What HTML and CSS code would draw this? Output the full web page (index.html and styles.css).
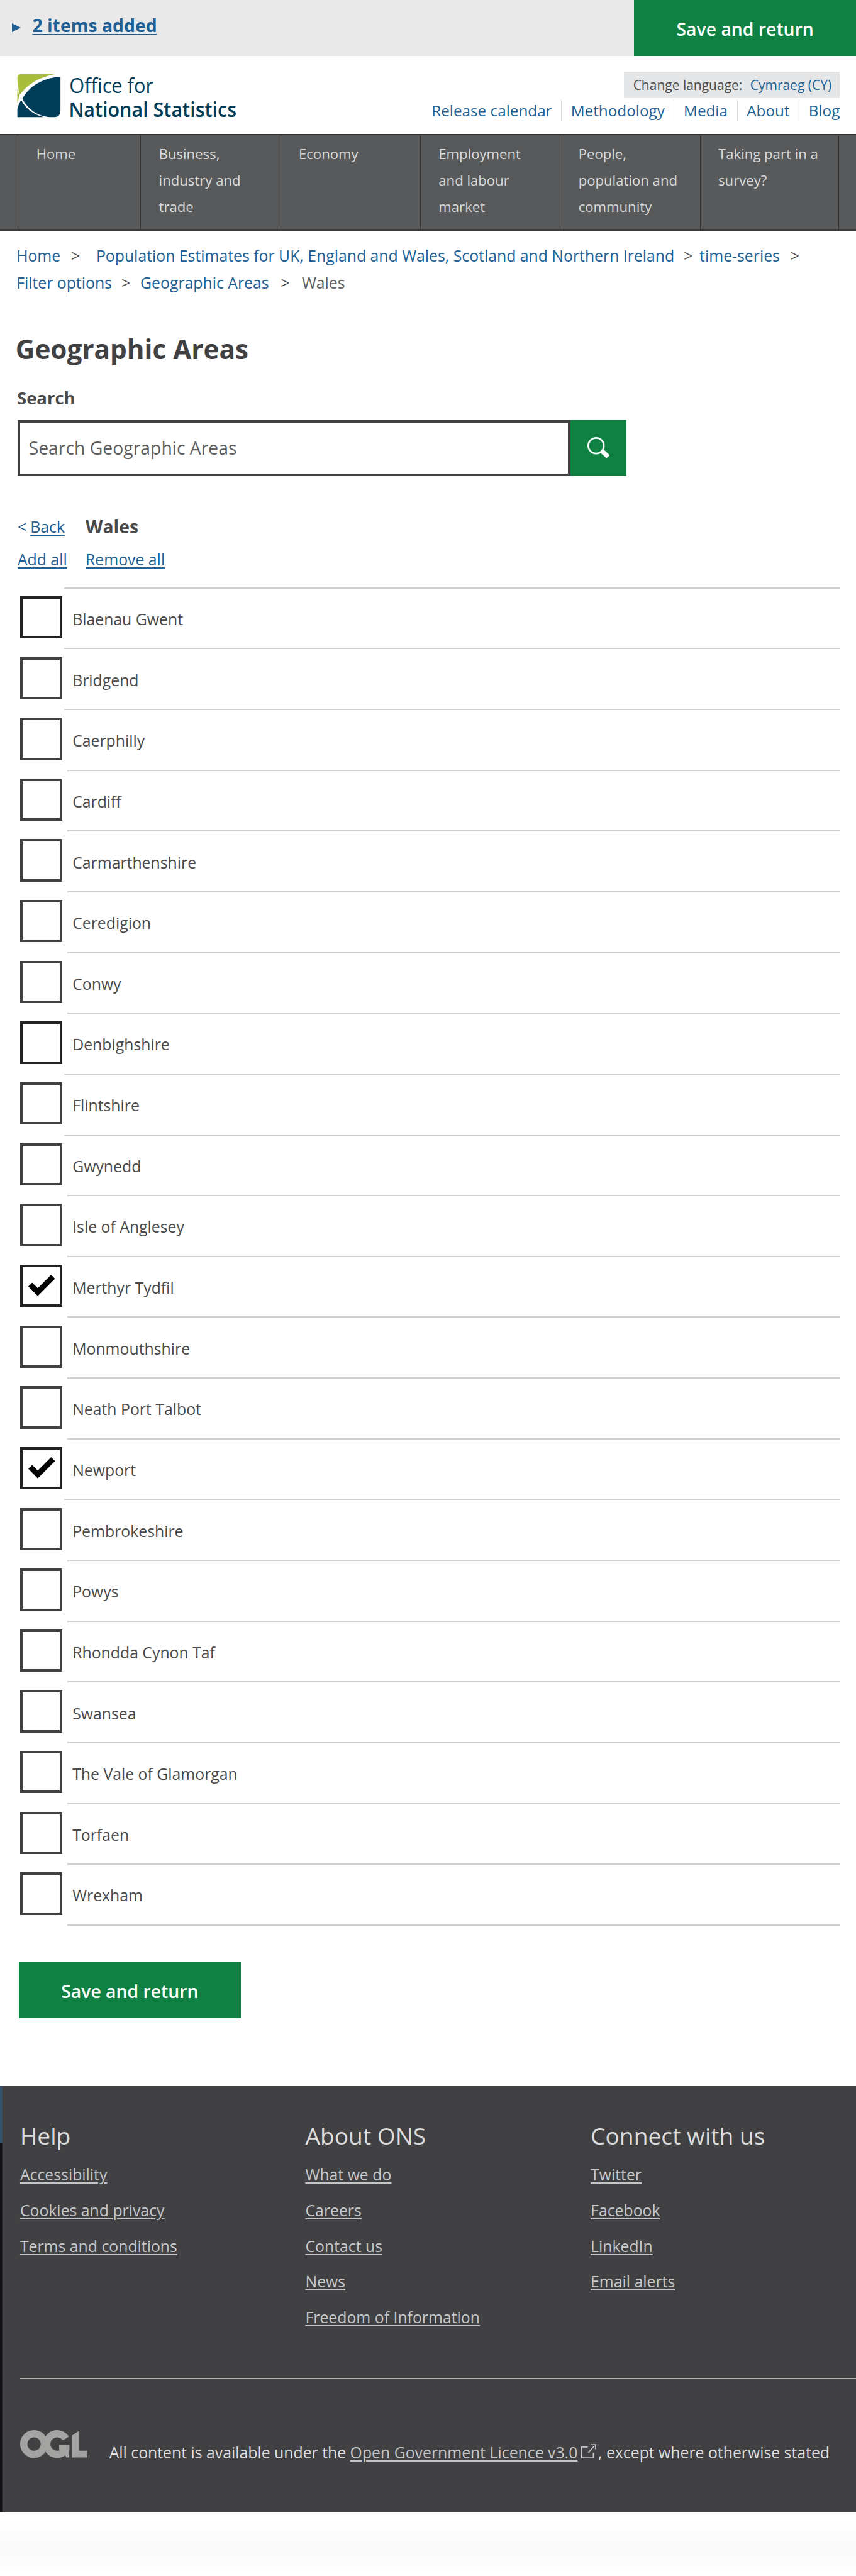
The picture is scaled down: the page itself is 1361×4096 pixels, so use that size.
FILE: index.html
```html
<!DOCTYPE html>
<html lang="en">
<head>
<meta charset="utf-8">
<title>Geographic Areas - Office for National Statistics</title>
<link rel="stylesheet" href="styles.css">
</head>
<body>
<div class="basket">
  <div class="basket-summary"><svg class="caret" viewBox="0 0 16 16"><path d="M0 0L16 8L0 16Z"/></svg><a class="basket-link" href="#">2 items added</a></div>
  <button class="save save-top">Save and return</button>
</div>
<header class="header">
  <svg class="logo" viewBox="0 0 420 90" role="img" aria-label="Office for National Statistics">
    <path class="logo-green" d="M.7 6Q.7 0 7 0H68C40 5 18 19 5 37C2 26 .7 16 .7 6ZM.7 26L4.300 39L.7 52Z"/>
    <path class="logo-blue" d="M78 4.500V64Q78 77 67 77H58C36 75 19 62 9.700 44C22 21 46 7 78 4.500Z"/>
    <path class="logo-blue" d="M.7 62Q3 53 7.500 46C15 61 28 72 48 77H.7Z"/>
    <text class="logo-line" x="94" y="34" textLength="151" lengthAdjust="spacingAndGlyphs">Office for</text>
    <text class="logo-line logo-strong" x="93" y="76.500" textLength="301" lengthAdjust="spacingAndGlyphs">National Statistics</text>
  </svg>
  <div class="header-side">
    <div class="language"><span>Change language:</span><a href="#">Cymraeg (CY)</a></div>
    <ul class="links">
      <li><a href="#">Release calendar</a></li>
      <li><a href="#">Methodology</a></li>
      <li><a href="#">Media</a></li>
      <li><a href="#">About</a></li>
      <li><a href="#">Blog</a></li>
    </ul>
  </div>
</header>
<nav class="nav">
  <a href="#">Home</a>
  <a href="#">Business,<br>industry and<br>trade</a>
  <a href="#">Economy</a>
  <a href="#">Employment<br>and labour<br>market</a>
  <a href="#">People,<br>population and<br>community</a>
  <a href="#">Taking part in a<br>survey?</a>
</nav>
<main>
  <div class="crumbs">
    <div class="crumb-row">
      <a href="#">Home</a><span class="sep sep-home">&gt;</span>
      <a href="#">Population Estimates for UK, England and Wales, Scotland and Northern Ireland</a><span class="sep sep-title">&gt;</span>
      <a href="#">time-series</a><span class="sep">&gt;</span>
    </div>
    <div class="crumb-row">
      <a href="#">Filter options</a><span class="sep sep-filter">&gt;</span>
      <a href="#">Geographic Areas</a><span class="sep sep-geo">&gt;</span>
      <span class="crumb-current">Wales</span>
    </div>
  </div>
  <h1>Geographic Areas</h1>
  <h2 class="search-label">Search</h2>
  <div class="search">
    <input class="search-input" type="text" placeholder="Search Geographic Areas">
    <button class="search-button" aria-label="Search"><svg viewBox="0 0 40 38"><circle cx="15.500" cy="15.500" r="14"/><path d="M26 23L31 24L40 32.500L34 38L24.500 29Z"/></svg></button>
  </div>
  <div class="tools">
    <span class="back"><span>&lt;</span><a href="#">Back</a></span><strong>Wales</strong>
    <a class="add" href="#">Add all</a><a class="remove" href="#">Remove all</a>
  </div>
  <ul class="areas">
    <li class="area wide"><span class="box dark"></span><span class="name">Blaenau Gwent</span></li>
    <li class="area wide"><span class="box"></span><span class="name">Bridgend</span></li>
    <li class="area wide"><span class="box"></span><span class="name">Caerphilly</span></li>
    <li class="area"><span class="box"></span><span class="name">Cardiff</span></li>
    <li class="area"><span class="box"></span><span class="name">Carmarthenshire</span></li>
    <li class="area"><span class="box"></span><span class="name">Ceredigion</span></li>
    <li class="area"><span class="box"></span><span class="name">Conwy</span></li>
    <li class="area"><span class="box dark"></span><span class="name">Denbighshire</span></li>
    <li class="area wide"><span class="box"></span><span class="name">Flintshire</span></li>
    <li class="area wide"><span class="box"></span><span class="name">Gwynedd</span></li>
    <li class="area"><span class="box"></span><span class="name">Isle of Anglesey</span></li>
    <li class="area"><span class="box dark"><svg class="tick" viewBox="0 0 48 38"><path d="M0 21L7 14L17 24L41 0L48 7L17 38Z"/></svg></span><span class="name">Merthyr Tydfil</span></li>
    <li class="area"><span class="box"></span><span class="name">Monmouthshire</span></li>
    <li class="area"><span class="box"></span><span class="name">Neath Port Talbot</span></li>
    <li class="area"><span class="box dark"><svg class="tick" viewBox="0 0 48 38"><path d="M0 21L7 14L17 24L41 0L48 7L17 38Z"/></svg></span><span class="name">Newport</span></li>
    <li class="area wide"><span class="box"></span><span class="name">Pembrokeshire</span></li>
    <li class="area"><span class="box"></span><span class="name">Powys</span></li>
    <li class="area"><span class="box"></span><span class="name">Rhondda Cynon Taf</span></li>
    <li class="area"><span class="box"></span><span class="name">Swansea</span></li>
    <li class="area"><span class="box"></span><span class="name">The Vale of Glamorgan</span></li>
    <li class="area"><span class="box"></span><span class="name">Torfaen</span></li>
    <li class="area last"><span class="box"></span><span class="name">Wrexham</span></li>
  </ul>
  <button class="save save-bottom">Save and return</button>
</main>
<footer class="footer">
  <div class="footer-cols">
    <section>
      <h3>Help</h3>
      <a href="#">Accessibility</a>
      <a href="#">Cookies and privacy</a>
      <a href="#">Terms and conditions</a>
    </section>
    <section>
      <h3>About ONS</h3>
      <a href="#">What we do</a>
      <a href="#">Careers</a>
      <a href="#">Contact us</a>
      <a href="#">News</a>
      <a href="#">Freedom of Information</a>
    </section>
    <section>
      <h3>Connect with us</h3>
      <a href="#">Twitter</a>
      <a href="#">Facebook</a>
      <a href="#">LinkedIn</a>
      <a href="#">Email alerts</a>
    </section>
  </div>
  <div class="licence">
    <svg class="ogl" viewBox="0 0 120 50" role="img" aria-label="OGL"><circle cx="25" cy="25" r="18.500"/><path d="M82 15A18.500 18.500 0 1 0 82 35V33H71"/><path class="ogl-solid" d="M70 26H88V49H83L80 44V35H70ZM93 10L106 1V37H120V49H93Z"/></svg>
    <p>All content is available under the <a href="#">Open Government Licence v3.0</a><svg class="external" viewBox="0 0 27 26"><path d="M12 5.500H1V25H22V16M13 16L24 3M18 1.200H25.800V9.500"/></svg>, except where otherwise stated</p>
  </div>
</footer>
<div class="fade"></div>
</body>
</html>
```
FILE: styles.css
```css
/* 1rem is ten layout units */
html { font-size: 8.8594px; }
* { box-sizing: border-box; }
body { margin: 0; background: #fff; color: #4a4a4a; font-family: "Open Sans", "Noto Sans", sans-serif; font-size: 2.8rem; }
a { color: #206095; text-decoration: none; }
ul, h1, h2, h3, p { margin: 0; padding: 0; list-style: none; }
button, input { font: inherit; margin: 0; border: 0; border-radius: 0; }
svg { display: block; flex: none; }

.basket { display: flex; justify-content: space-between; height: 10rem; background: #e9e9e9; }
.basket-summary { display: flex; padding-left: 2.2rem; height: 9.12rem; line-height: 9.12rem; }
.caret { width: 1.6rem; height: 1.6rem; margin: 4.2rem 2rem 0 0; fill: #206095; }
.basket-link { font-size: 3.2rem; font-weight: 700; text-decoration: underline; text-decoration-thickness: .2rem; text-underline-offset: .3rem; }
.save { background: #0f8243; color: #fff; font-size: 3.2rem; font-weight: 600; text-align: center; white-space: nowrap; padding: .3rem 0 0; height: 10rem; }
.save-top { width: 39.8rem; }

.header { display: flex; justify-content: space-between; height: 14rem; padding: 0 2.9rem 0 3.1rem; }
.logo { width: 42rem; height: 9rem; margin-top: 3.3rem; overflow: visible; }
.logo-green { fill: #a8bd3a; }
.logo-blue { fill: #003d59; }
.logo-line { fill: #003d59; font-size: 37px; }
.logo-strong { font-weight: 600; }
.header-side { display: flex; flex-direction: column; align-items: flex-end; padding-top: 2.9rem; }
.language { display: flex; gap: 1.4rem; width: 38.7rem; height: 4.7rem; padding-left: 1.6rem; line-height: 4.9rem; background: #e4e6e8; font-size: 2.37rem; white-space: nowrap; }
.links { display: flex; margin-top: .4rem; font-size: 2.74rem; line-height: 3.8rem; white-space: nowrap; }
.links li { height: 3.7rem; }
.links li + li { margin-left: 1.65rem; padding-left: 1.65rem; border-left: 1px solid #dcdcdd; }

.nav { display: grid; grid-template-columns: 22rem 25.1rem 25.1rem 25.1rem 25.1rem 25rem; height: 17.4rem; padding-left: 3.2rem; background: #58595b; border-top: 2px solid #333; border-bottom: 3px solid #38383a; }
.nav a { padding: 1.1rem 0 0 3.2rem; border-left: 1px solid #333; color: #d9d9da; font-size: 2.5rem; line-height: 4.7rem; white-space: nowrap; }
.nav a:last-child { border-right: 1px solid #333; }

.crumbs { padding: 2.1rem 0 0 2.95rem; line-height: 4.8rem; height: 13rem; }
.crumb-row { display: flex; white-space: nowrap; }
.sep { width: 1.6rem; margin: 0 0 0 1.9rem; }
.sep-home { margin-right: 2.9rem; }
.sep-title { margin: 0 1.2rem 0 1.7rem; }
.sep-filter { margin: 0 1.8rem 0 1.7rem; }
.sep-geo { margin: 0 2.2rem 0 2.1rem; }
.crumb-current { color: #5f5f5f; }
h1 { padding: 4.9rem 0 0 2.8rem; height: 13.6rem; font-size: 4.77rem; line-height: 6.8rem; color: #414042; }
.search-label { padding: 1.4rem 0 0 3.05rem; height: 7.4rem; font-size: 3.1rem; line-height: 4rem; }
.search { display: flex; height: 10rem; padding-left: 3.2rem; }
.search-input { width: 99.2rem; padding: 0 0 0 1.5rem; border: 4px solid #414042; font-size: 3.2rem; }
.search-input::placeholder { color: #5f5f5f; opacity: 1; }
.search-button { width: 10rem; padding: 0 0 0 3rem; background: #0f8243; }
.search-button svg { width: 4rem; height: 3.8rem; margin-top: -.2rem; fill: #fff; }
.search-button circle { fill: none; stroke: #fff; stroke-width: 3; }
.tools { display: grid; grid-template-columns: 12.2rem auto; grid-auto-rows: 5.8rem; line-height: 5.8rem; padding: 6.3rem 0 0 3.15rem; height: 20rem; white-space: nowrap; }
.tools a { text-decoration: underline; text-decoration-thickness: .2rem; text-underline-offset: .3rem; }
.tools strong { font-size: 3.2rem; }
.back { color: #206095; }
.back a { margin-left: .7rem; }
.add, .remove { justify-self: start; }

.areas { padding: 0 2.8rem 0 3.6rem; }
.area { display: flex; height: 10.909rem; }
.box { flex: none; width: 7.6rem; height: 7.6rem; margin: 1.6rem .9rem 0 0; border: 4px solid #414042; }
.dark { border-color: #222; }
.tick { width: 4.8rem; height: 3.8rem; margin: 1.35rem 0 0 1rem; }
.name { flex: 1; padding: 3.75rem 0 0 .9rem; border-top: 2px solid #d0d0d0; line-height: 3.6rem; }
.wide .box { margin-right: .3rem; }
.wide .name { padding-left: 1.5rem; }
.last { height: 11.1rem; }
.last .name { border-bottom: 2px solid #d0d0d0; }
.save-bottom { display: block; width: 39.8rem; margin: 6.6rem 0 12.2rem 3.4rem; }

.footer { height: 76.4rem; background: linear-gradient(#36536e 10.3rem, #0f0f12 10.3rem) no-repeat 0 0 / .4rem 100%, #414042; color: #dcdcdd; }
.footer a { color: #c4c6c8; text-decoration: underline; text-decoration-thickness: .2rem; text-underline-offset: .3rem; }
.footer-cols { display: grid; grid-template-columns: 51.2rem 51.2rem auto; height: 52.4rem; padding: 5.9rem 0 0 3.6rem; }
.footer section { display: flex; flex-direction: column; align-items: flex-start; }
.footer h3 { font-size: 4.2rem; font-weight: 400; line-height: 6rem; margin-bottom: .8rem; }
.footer section a { line-height: 6.4rem; }
.licence { display: flex; margin-left: 3.6rem; border-top: 2px solid #b0b0b1; }
.ogl { width: 12rem; height: 5rem; margin: 9.1rem 4rem 0 0; fill: none; stroke: #a3a3a1; stroke-width: 13; }
.ogl-solid { fill: #a3a3a1; stroke: none; }
.licence p { padding-top: 11.2rem; line-height: 4rem; white-space: nowrap; }
.external { display: inline-block; width: 2.7rem; height: 2.6rem; margin: 0 .4rem 0 .6rem; fill: none; stroke: #c4c6c8; stroke-width: 2; }
.fade { height: 11.5rem; background: linear-gradient(#fff 15%, #f9f9f9 55%, #fff 100%); }
```
